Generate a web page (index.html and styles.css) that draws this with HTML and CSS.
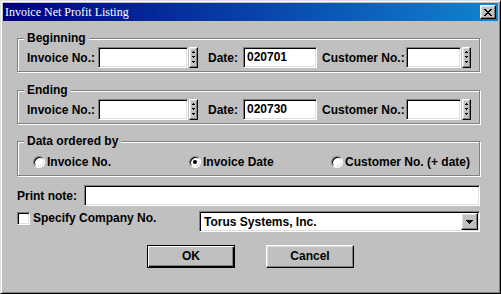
FILE: index.html
```html
<!DOCTYPE html>
<html>
<head>
<meta charset="utf-8">
<title>Invoice Net Profit Listing</title>
<link rel="stylesheet" href="styles.css">
</head>
<body>
<div class="window">
  <div class="titlebar">
    <span class="title">Invoice Net Profit Listing</span>
    <span class="close raised"><svg width="8" height="7" viewBox="0 0 8 7" shape-rendering="crispEdges"><path d="M0 0h2v1H0zM6 0h2v1H6zM1 1h2v1H1zM5 1h2v1H5zM2 2h4v1H2zM3 3h2v1H3zM2 4h4v1H2zM1 5h2v1H1zM5 5h2v1H5zM0 6h2v1H0zM6 6h2v1H6z" fill="#000"/></svg></span>
  </div>
  <div class="content">
    <fieldset class="group g1">
      <legend>Beginning</legend>
      <div class="row">
        <span class="lab lab-inv">Invoice No.:</span>
        <span class="field f-inv"></span>
        <span class="spin raised"><svg width="7" height="19" viewBox="0 0 7 19" shape-rendering="crispEdges"><path d="M3 3h1v1H3zM2 4h3v1H2zM2 8h3v1H2zM3 9h1v1H3zM2 13h3v1H2zM3 14h1v1H3z" fill="#000"/></svg></span>
        <span class="lab lab-date">Date:</span>
        <span class="field f-date">020701</span>
        <span class="lab lab-cust">Customer No.:</span>
        <span class="field f-cust"></span>
        <span class="spin raised"><svg width="7" height="19" viewBox="0 0 7 19" shape-rendering="crispEdges"><path d="M3 3h1v1H3zM2 4h3v1H2zM2 8h3v1H2zM3 9h1v1H3zM2 13h3v1H2zM3 14h1v1H3z" fill="#000"/></svg></span>
      </div>
    </fieldset>
    <fieldset class="group g2">
      <legend>Ending</legend>
      <div class="row">
        <span class="lab lab-inv">Invoice No.:</span>
        <span class="field f-inv"></span>
        <span class="spin raised"><svg width="7" height="19" viewBox="0 0 7 19" shape-rendering="crispEdges"><path d="M3 3h1v1H3zM2 4h3v1H2zM2 8h3v1H2zM3 9h1v1H3zM2 13h3v1H2zM3 14h1v1H3z" fill="#000"/></svg></span>
        <span class="lab lab-date">Date:</span>
        <span class="field f-date">020730</span>
        <span class="lab lab-cust">Customer No.:</span>
        <span class="field f-cust"></span>
        <span class="spin raised"><svg width="7" height="19" viewBox="0 0 7 19" shape-rendering="crispEdges"><path d="M3 3h1v1H3zM2 4h3v1H2zM2 8h3v1H2zM3 9h1v1H3zM2 13h3v1H2zM3 14h1v1H3z" fill="#000"/></svg></span>
      </div>
    </fieldset>
    <fieldset class="group g3">
      <legend>Data ordered by</legend>
      <div class="radios">
        <span class="opt opt1"><span class="radio"></span>Invoice No.</span>
        <span class="opt opt2"><span class="radio"><span class="dot"></span></span>Invoice Date</span>
        <span class="opt"><span class="radio"></span>Customer No. (+ date)</span>
      </div>
    </fieldset>
    <div class="note-row">
      <span class="lab note-lab">Print note:</span>
      <span class="field f-note"></span>
    </div>
    <div class="opt-row">
      <span class="check-lab"><span class="check"></span>Specify Company No.</span>
      <span class="combo">
        <span class="combo-text">Torus Systems, Inc.</span>
        <span class="dd raised"><svg width="7" height="4" viewBox="0 0 7 4" shape-rendering="crispEdges"><path d="M0 0h7v1H0zM1 1h5v1H1zM2 2h3v1H2zM3 3h1v1H3z" fill="#000"/></svg></span>
      </span>
    </div>
    <div class="btns">
      <span class="btn default">OK</span>
      <span class="btn raised">Cancel</span>
    </div>
  </div>
</div>
</body>
</html>
```

FILE: styles.css
```css
* { box-sizing: border-box; }

body {
  margin: 0;
  background: #c0c0c0;
  font-family: "Liberation Sans", Arial, sans-serif;
  font-size: 12px;
  font-weight: bold;
  color: #000;
}

.window {
  width: 501px;
  height: 294px;
  background: #c0c0c0;
  border: 1px solid;
  border-color: #dfdfdf #000 #000 #dfdfdf;
  box-shadow: inset 1px 1px #fff, inset -1px -1px #808080;
  padding: 2px;
}

.titlebar {
  height: 18px;
  display: flex;
  align-items: center;
  background: linear-gradient(to right, #000080, #1084d0);
  padding: 0 2px;
}

.title {
  flex: 1;
  font-family: "Liberation Serif", "Times New Roman", serif;
  font-weight: normal;
  font-size: 12px;
  line-height: 18px;
  color: #fff;
  white-space: nowrap;
}

.raised {
  background: #c0c0c0;
  border: 1px solid;
  border-color: #fff #000 #000 #fff;
  box-shadow: inset -1px -1px #808080, inset 1px 1px #dfdfdf;
}

.close {
  width: 16px;
  height: 14px;
  display: flex;
  align-items: center;
  justify-content: center;
}

.close svg, .spin svg, .dd svg { display: block; }

.content {
  padding: 11px 18px 0 14px;
}

.group {
  margin: 0;
  min-width: 0;
  padding: 2px 0 3px 6px;
  border: 1px solid #808080;
  box-shadow: inset 1px 1px #fff, 1px 1px #fff;
}

.group legend {
  padding: 0 3px;
  line-height: 13px;
  background: #c0c0c0;
}

.g2 { margin-top: 12px; }
.g3 { margin-top: 11px; padding: 6px 0 5px 6px; }

.row {
  display: flex;
  align-items: center;
  height: 21px;
  padding-left: 3px;
}

.lab { white-space: nowrap; }
.lab-inv { width: 71px; }
.lab-date { width: 35px; margin-left: 10px; }
.lab-cust { width: 84px; margin-left: 5px; }

.field {
  height: 21px;
  display: block;
  background: #fff;
  border: 1px solid;
  border-color: #808080 #fff #fff #808080;
  box-shadow: inset 1px 1px #000, inset -1px -1px #dfdfdf;
  padding-left: 3px;
  line-height: 19px;
  white-space: nowrap;
}

.f-inv { width: 90px; }
.f-date { width: 74px; }
.f-cust { width: 55px; }

.spin {
  width: 9px;
  height: 21px;
  margin-left: 1px;
}

.radios {
  display: flex;
  align-items: center;
  height: 16px;
  padding-left: 9px;
}

.opt {
  display: flex;
  align-items: center;
  white-space: nowrap;
}
.opt1 { width: 156px; }
.opt2 { width: 142px; }

.radio {
  width: 12px;
  height: 12px;
  border-radius: 50%;
  border: 1px solid;
  border-color: #808080 #fff #fff #808080;
  box-shadow: inset 1px 1px #000, inset -1px -1px #dfdfdf;
  background: #fff;
  margin-right: 2px;
  display: flex;
  align-items: center;
  justify-content: center;
}

.dot {
  width: 4px;
  height: 4px;
  border-radius: 50%;
  background: #000;
}

.note-row {
  display: flex;
  align-items: center;
  margin-top: 9px;
  height: 21px;
}
.note-lab { width: 67px; }
.f-note { flex: 1; }

.opt-row {
  display: flex;
  align-items: flex-start;
  margin-top: 5px;
}

.check-lab {
  display: flex;
  align-items: center;
  margin-top: 1px;
  line-height: 13px;
  white-space: nowrap;
}

.check {
  width: 13px;
  height: 13px;
  background: #fff;
  border: 1px solid;
  border-color: #808080 #fff #fff #808080;
  box-shadow: inset 1px 1px #000, inset -1px -1px #dfdfdf;
  margin-right: 3px;
}

.combo {
  margin-left: auto;
  width: 281px;
  height: 21px;
  display: flex;
  align-items: center;
  background: #fff;
  border: 1px solid;
  border-color: #808080 #fff #fff #808080;
  box-shadow: inset 1px 1px #000, inset -1px -1px #dfdfdf;
  padding: 0 1px 0 4px;
}

.combo-text { flex: 1; white-space: nowrap; }

.dd {
  width: 17px;
  height: 17px;
  display: flex;
  align-items: center;
  justify-content: center;
}

.btns {
  display: flex;
  gap: 31px;
  margin-top: 13px;
  padding-left: 130px;
}

.btn {
  width: 88px;
  height: 23px;
  display: flex;
  align-items: center;
  justify-content: center;
  padding-bottom: 2px;
}

.btn.default {
  background: #c0c0c0;
  border: 1px solid #000;
  box-shadow: inset 1px 1px #fff, inset -1px -1px #000, inset -2px -2px #808080;
}
```
